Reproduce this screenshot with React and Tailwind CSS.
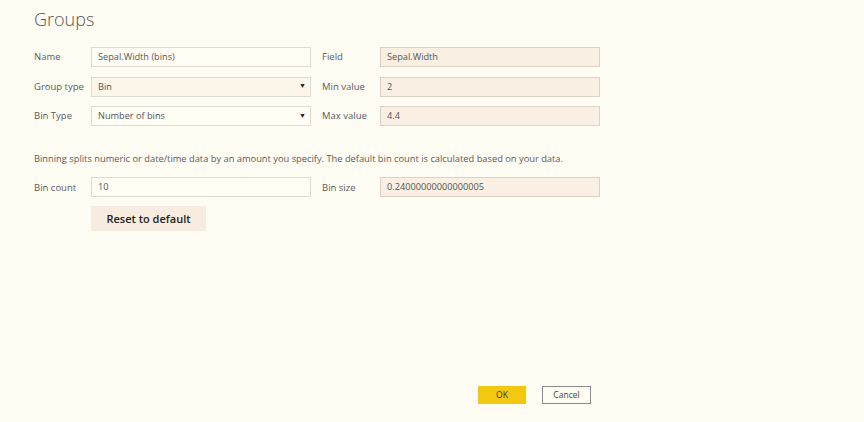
import React from "react";

const font = { fontFamily: '"Open Sans", "Noto Sans", sans-serif' };

function Label({ children }) {
  return <div className="w-[57px] text-[9.5px] text-[#5a5a5a] leading-none">{children}</div>;
}

function TextInput({ value, tone = "light" }) {
  const cls =
    tone === "light"
      ? "bg-[#fffdf4] border-[#dedbd0]"
      : "bg-[#f9efe2] border-[#dcd3c6]";
  return (
    <div className={`w-[220px] h-[20px] border ${cls} flex items-center pl-[6px] text-[9.2px] text-[#555]`}>
      {value}
    </div>
  );
}

function Select({ value, tone }) {
  const cls = tone === "dark" ? "bg-[#fbf6e9]" : "bg-[#fffdf4]";
  return (
    <div className={`w-[220px] h-[20px] border border-[#dedbd0] ${cls} flex items-center justify-between pl-[6px] pr-[4px] text-[9.2px] text-[#555]`}>
      <span>{value}</span>
      <span className="text-[7px] text-[#222]">▼</span>
    </div>
  );
}

export default function App() {
  return (
    <div className="w-[864px] h-[422px] bg-[#fffdf3] relative" style={font}>
      <div className="pl-[34px] pt-[7px]">
        <div className="text-[18px] font-light text-[#555] leading-[24px]">Groups</div>
        <div className="mt-[16px] flex flex-col gap-[9.5px]">
          <div className="flex items-center">
            <Label>Name</Label>
            <TextInput value="Sepal.Width (bins)" />
            <div className="w-[11px]" />
            <Label>Field</Label>
            <div className="w-[1px]" />
            <TextInput value="Sepal.Width" tone="dark" />
          </div>
          <div className="flex items-center">
            <Label>Group type</Label>
            <Select value="Bin" tone="dark" />
            <div className="w-[11px]" />
            <Label>Min value</Label>
            <div className="w-[1px]" />
            <TextInput value="2" tone="dark" />
          </div>
          <div className="flex items-center">
            <Label>Bin Type</Label>
            <Select value="Number of bins" />
            <div className="w-[11px]" />
            <Label>Max value</Label>
            <div className="w-[1px]" />
            <TextInput value="4.4" tone="dark" />
          </div>
        </div>
        <div className="mt-[28px] text-[9.3px] text-[#5a5a5a] leading-none">
          Binning splits numeric or date/time data by an amount you specify. The default bin count is calculated based on your data.
        </div>
        <div className="mt-[14px] flex items-center">
          <Label>Bin count</Label>
          <TextInput value="10" />
          <div className="w-[11px]" />
          <Label>Bin size</Label>
          <div className="w-[1px]" />
          <TextInput value="0.24000000000000005" tone="dark" />
        </div>
        <div className="mt-[9px] ml-[57px] w-[115px] h-[25px] bg-[#f8ece0] flex items-center justify-center text-[11px] font-semibold text-[#222]">
          Reset to default
        </div>
      </div>
      <div className="absolute left-[478px] top-[386px] flex gap-[16px]">
        <div className="w-[48px] h-[18px] bg-[#f2c811] flex items-center justify-center text-[8.5px] text-[#333]">OK</div>
        <div className="w-[49px] h-[18px] border border-[#8a8a8a] bg-[#fffdf3] flex items-center justify-center text-[8.5px] text-[#444]">Cancel</div>
      </div>
    </div>
  );
}
